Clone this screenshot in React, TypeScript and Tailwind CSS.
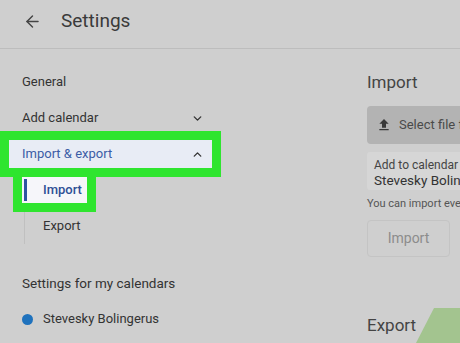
import React from 'react';
import { ArrowLeft, ChevronDown, ChevronUp } from 'lucide-react';

const UploadIcon = () => (
  <svg className="shrink-0" width="16" height="16" viewBox="0 0 24 24" fill="#3a3a3a">
    <path d="M9 16h6v-6h4l-7-7-7 7h4zm-4 2h14v2H5z" />
  </svg>
);

const App: React.FC = () => {
  return (
    <div className="relative w-[460px] h-[343px] overflow-hidden bg-[#cfcfcf] text-[#333] font-['Roboto',sans-serif]">
      {/* Top bar */}
      <div className="h-[49px] border-b border-[#bdbdbd] flex items-start pt-[9px]">
        <div className="h-[24px] flex items-center">
          <ArrowLeft className="ml-[23px] w-[19px] h-[19px] text-[#444]" strokeWidth={1.8} />
          <span className="ml-[19px] text-[19px] text-[#3a3a3a]">Settings</span>
        </div>
      </div>

      <div className="grid grid-cols-[367px_1fr]">
        {/* Left nav */}
        <div className="pt-[15px] text-[13px]">
          <div className="h-[36px] ml-[9px] w-[203px] pl-[13px] flex items-center">General</div>
          <div className="h-[36px] ml-[9px] w-[203px] pl-[13px] pr-[8px] flex items-center justify-between">
            <span>Add calendar</span>
            <ChevronDown className="w-[13px] h-[13px] text-[#333]" strokeWidth={2.5} />
          </div>
          <div className="h-[36px] flex items-center">
            <div className="ml-[9px] w-[203px] h-[28px] pl-[13px] pr-[8px] flex items-center justify-between bg-[#e8ecf5] text-[#3b5ca6] outline-[9px] outline-solid outline-[#2fe52f]">
              <span>Import &amp; export</span>
              <ChevronUp className="w-[13px] h-[13px] text-[#333]" strokeWidth={2.5} />
            </div>
          </div>
          <div className="ml-[24px] border-l border-[#c0c0c0]">
            <div className="h-[36px] flex items-center">
              <div className="-ml-[3px] w-[65px] h-[26px] flex items-center bg-[#f6f6fa] outline-[9px] outline-solid outline-[#2fe52f]">
                <div className="ml-[2px] w-[3px] h-[22px] bg-[#2e54a0]" />
                <span className="ml-[16px] text-[#2e4f96] font-medium">Import</span>
              </div>
            </div>
            <div className="h-[36px] pl-[18px] flex items-center">Export</div>
          </div>
          <div className="mt-[21px] h-[36px] pl-[22px] flex items-center text-[13.5px]">Settings for my calendars</div>
          <div className="h-[36px] pl-[22px] flex items-center">
            <span className="w-[11px] h-[11px] rounded-full bg-[#1f72bd]" />
            <span className="ml-[10px]">Stevesky Bolingerus</span>
          </div>
        </div>

        {/* Right content */}
        <div className="pt-[20px] whitespace-nowrap">
          <div className="leading-[26px] text-[17px] text-[#444]">Import</div>
          <div className="mt-[11px] h-[38px] w-[200px] rounded-l-[4px] bg-[#b3b3b3] flex items-center pl-[9px]">
            <UploadIcon />
            <span className="shrink-0 ml-[7px] text-[13px] text-[#4a4a4a]">Select file from your computer</span>
          </div>
          <div className="mt-[8px] h-[38px] w-[200px] rounded-l-[3px] bg-[#d6d6d6] pl-[7px] pt-[6px]">
            <div className="text-[12px] leading-[14px] text-[#444]">Add to calendar</div>
            <div className="text-[13.5px] leading-[16px] text-[#333]">Stevesky Bolingerus</div>
          </div>
          <div className="mt-[7px] text-[11px] leading-[14px] text-[#555]">You can import events from a file</div>
          <div className="mt-[9px] h-[37px] w-[83px] rounded-[4px] border border-[#c4c4c4] flex items-center justify-center text-[14px] text-[#8c8c8c]">
            Import
          </div>
          <div className="mt-[55px] leading-[26px] text-[17px] text-[#444]">Export</div>
        </div>
      </div>

      <svg className="absolute left-0 top-0" width="460" height="343">
        <polygon points="434,308 460,308 460,343 416,343" fill="#a3c48f" />
      </svg>
    </div>
  );
};

export default App;
